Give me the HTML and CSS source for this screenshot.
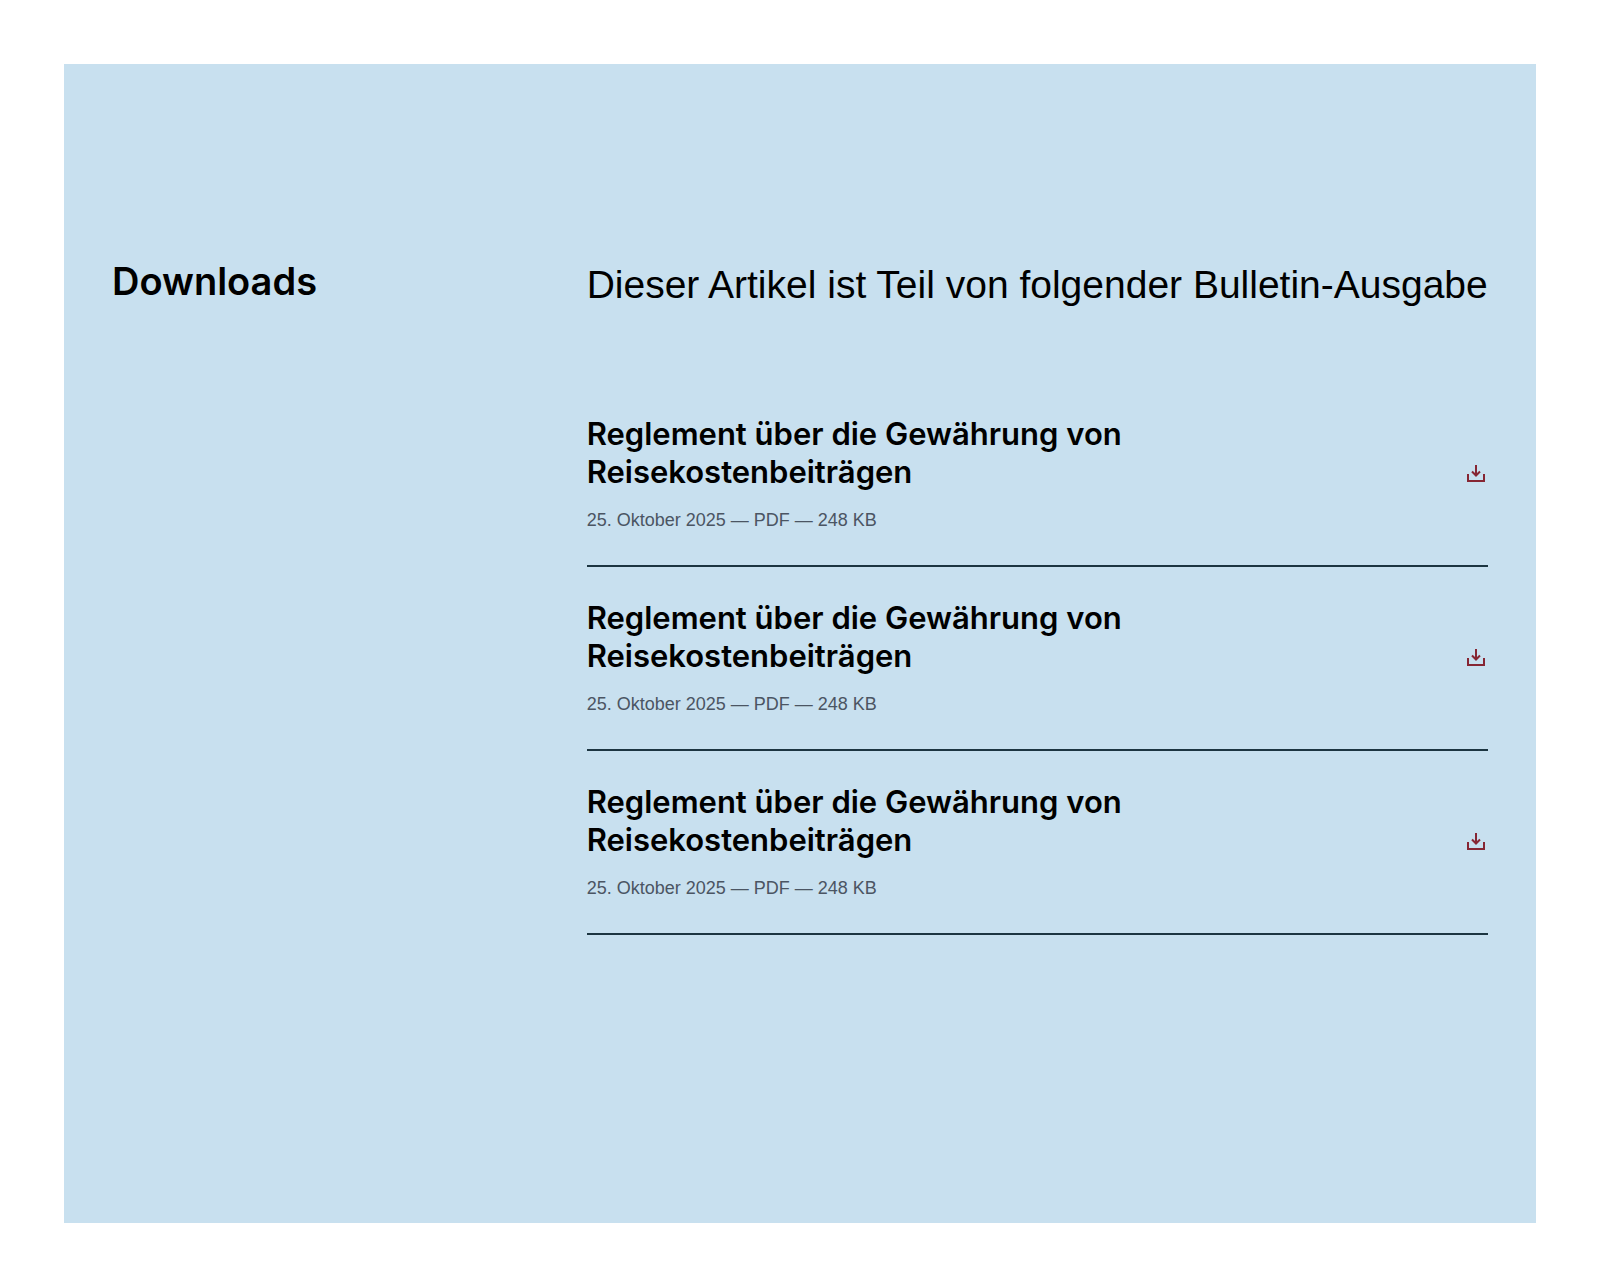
FILE: index.html
```html
<!DOCTYPE html>
<html lang="de">
<head>
<meta charset="utf-8">
<meta name="viewport" content="width=device-width, initial-scale=1">
<title>Downloads</title>
<link rel="stylesheet" href="styles.css">
</head>
<body>
<section class="downloads" aria-labelledby="downloads-title">
  <h2 class="downloads-title" id="downloads-title">Downloads</h2>
  <div class="downloads-content">
    <p class="downloads-lead">Dieser Artikel ist Teil von folgender Bulletin-Ausgabe</p>
    <ul class="download-list">
      <li>
        <a class="download" href="#">
          <span class="download-text">
            <span class="download-name">Reglement über die Gewährung von Reisekostenbeiträgen</span>
            <span class="download-meta">25. Oktober 2025 — PDF — 248 KB</span>
          </span>
          <svg class="download-icon" viewBox="0 0 24 24" aria-hidden="true"><path d="M4 12v7h16v-7M12 3v10M8 9.500l4 4 4-4"/></svg>
        </a>
      </li>
      <li>
        <a class="download" href="#">
          <span class="download-text">
            <span class="download-name">Reglement über die Gewährung von Reisekostenbeiträgen</span>
            <span class="download-meta">25. Oktober 2025 — PDF — 248 KB</span>
          </span>
          <svg class="download-icon" viewBox="0 0 24 24" aria-hidden="true"><path d="M4 12v7h16v-7M12 3v10M8 9.500l4 4 4-4"/></svg>
        </a>
      </li>
      <li>
        <a class="download" href="#">
          <span class="download-text">
            <span class="download-name">Reglement über die Gewährung von Reisekostenbeiträgen</span>
            <span class="download-meta">25. Oktober 2025 — PDF — 248 KB</span>
          </span>
          <svg class="download-icon" viewBox="0 0 24 24" aria-hidden="true"><path d="M4 12v7h16v-7M12 3v10M8 9.500l4 4 4-4"/></svg>
        </a>
      </li>
    </ul>
  </div>
</section>
</body>
</html>
```

FILE: styles.css
```css
* {
  box-sizing: border-box;
}

body {
  margin: 0;
  padding: 64px;
  background: #fff;
  color: #000;
  font-family: "Liberation Sans", Arial, sans-serif;
}

.downloads {
  display: grid;
  grid-template-columns: repeat(12, minmax(0, 1fr));
  column-gap: 48px;
  padding: 192px 48px 288px;
  background: #c8e0ef;
}

.downloads-title {
  grid-column: span 4;
  margin: 0;
  font-family: Inter, "Liberation Sans", sans-serif;
  font-size: 38px;
  font-weight: 600;
  line-height: 50px;
}

.downloads-content {
  grid-column: span 8;
}

.downloads-lead {
  margin: 0 0 69px;
  font-size: 39px;
  line-height: 58px;
}

.download-list {
  margin: 0;
  padding: 0;
  list-style: none;
}

.download {
  display: flex;
  align-items: center;
  justify-content: space-between;
  gap: 48px;
  padding: 32px 0;
  border-bottom: 2px solid #1c3541;
  color: inherit;
  text-decoration: none;
}

.download-text {
  display: flex;
  flex-direction: column;
  gap: 16px;
}

.download-name {
  font-family: Inter, "Liberation Sans", sans-serif;
  font-size: 31px;
  font-weight: 600;
  line-height: 38px;
}

.download-meta {
  color: #4b5563;
  font-size: 18px;
  line-height: 26px;
}

.download-icon {
  flex: none;
  width: 24px;
  height: 24px;
  fill: none;
  stroke: #862633;
  stroke-width: 2;
}
```
